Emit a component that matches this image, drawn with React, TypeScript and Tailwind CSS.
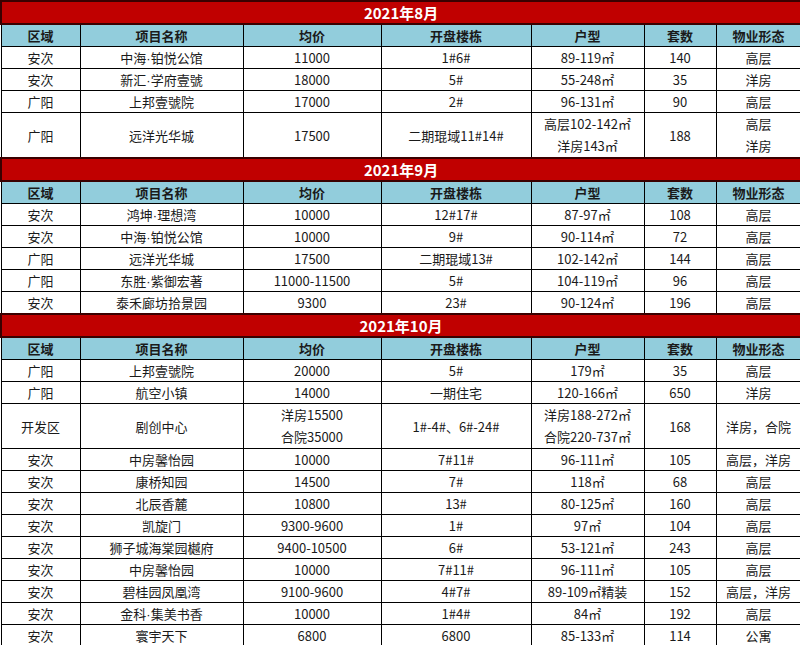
import React from 'react';

type Row = {
  area: string;
  name: string;
  price: string[];
  building: string;
  unit: string[];
  count: string;
  kind: string[];
};

const r = (
  area: string,
  name: string,
  price: string | string[],
  building: string,
  unit: string | string[],
  count: string,
  kind: string | string[]
): Row => ({
  area,
  name,
  price: Array.isArray(price) ? price : [price],
  building,
  unit: Array.isArray(unit) ? unit : [unit],
  count,
  kind: Array.isArray(kind) ? kind : [kind],
});

const sections: { title: string; rows: Row[] }[] = [
  {
    title: '2021年8月',
    rows: [
      r('安次', '中海·铂悦公馆', '11000', '1#6#', '89-119㎡', '140', '高层'),
      r('安次', '新汇·学府壹號', '18000', '5#', '55-248㎡', '35', '洋房'),
      r('广阳', '上邦壹號院', '17000', '2#', '96-131㎡', '90', '高层'),
      r('广阳', '远洋光华城', '17500', '二期琨域11#14#', ['高层102-142㎡', '洋房143㎡'], '188', ['高层', '洋房']),
    ],
  },
  {
    title: '2021年9月',
    rows: [
      r('安次', '鸿坤·理想湾', '10000', '12#17#', '87-97㎡', '108', '高层'),
      r('安次', '中海·铂悦公馆', '10000', '9#', '90-114㎡', '72', '高层'),
      r('广阳', '远洋光华城', '17500', '二期琨域13#', '102-142㎡', '144', '高层'),
      r('广阳', '东胜·紫御宏著', '11000-11500', '5#', '104-119㎡', '96', '高层'),
      r('安次', '泰禾廊坊拾景园', '9300', '23#', '90-124㎡', '196', '高层'),
    ],
  },
  {
    title: '2021年10月',
    rows: [
      r('广阳', '上邦壹號院', '20000', '5#', '179㎡', '35', '高层'),
      r('广阳', '航空小镇', '14000', '一期住宅', '120-166㎡', '650', '洋房'),
      r('开发区', '剧创中心', ['洋房15500', '合院35000'], '1#-4#、6#-24#', ['洋房188-272㎡', '合院220-737㎡'], '168', '洋房，合院'),
      r('安次', '中房馨怡园', '10000', '7#11#', '96-111㎡', '105', '高层，洋房'),
      r('安次', '康桥知园', '14500', '7#', '118㎡', '68', '高层'),
      r('安次', '北辰香麓', '10800', '13#', '80-125㎡', '160', '高层'),
      r('安次', '凯旋门', '9300-9600', '1#', '97㎡', '104', '高层'),
      r('安次', '狮子城海棠园樾府', '9400-10500', '6#', '53-121㎡', '243', '高层'),
      r('安次', '中房馨怡园', '10000', '7#11#', '96-111㎡', '105', '高层'),
      r('安次', '碧桂园凤凰湾', '9100-9600', '4#7#', '89-109㎡精装', '152', '高层，洋房'),
      r('安次', '金科·集美书香', '10000', '1#4#', '84㎡', '192', '高层'),
      r('安次', '寰宇天下', '6800', '6800', '85-133㎡', '114', '公寓'),
    ],
  },
];

const headers = ['区域', '项目名称', '均价', '开盘楼栋', '户型', '套数', '物业形态'];

// the middle dot is narrow in the original, CJK fonts draw it full width
const Name = ({ text }: { text: string }) => {
  const parts = text.split('·');
  if (parts.length === 1) return <>{text}</>;
  return (
    <>
      {parts[0]}
      <span className="leading-none" style={{ fontFamily: '"Liberation Sans", sans-serif' }}>
        ·
      </span>
      {parts[1]}
    </>
  );
};

const Lines = ({ items }: { items: string[] }) => (
  <>
    {items.map((t, i) => (
      <div key={i} className="h-[22px] leading-[22px]">
        {t}
      </div>
    ))}
  </>
);

const td = 'border border-black text-center align-middle p-0 leading-[21px]';

export default function App() {
  return (
    <div
      className="w-[800px] h-[645px] bg-white text-[#1a1a1a] text-[13px] overflow-hidden"
      style={{ fontFamily: '"Noto Sans CJK SC", "Noto Sans", sans-serif' }}
    >
      <table className="w-[800px] table-fixed border-collapse">
        <colgroup>
          <col className="w-[79px]" />
          <col className="w-[163px]" />
          <col className="w-[138px]" />
          <col className="w-[150px]" />
          <col className="w-[113px]" />
          <col className="w-[72px]" />
          <col className="w-[85px]" />
        </colgroup>
        <tbody>
          {sections.map((s) => (
            <React.Fragment key={s.title}>
              <tr className="h-[23px]">
                <td
                  colSpan={7}
                  className="border-2 border-[#3a0000] bg-[#c00000] text-white font-bold text-[15px] text-center p-0 leading-[20px]"
                >
                  {s.title}
                </td>
              </tr>
              <tr className="h-[22px] bg-[#92cddc]">
                {headers.map((h) => (
                  <td key={h} className={`${td} font-bold`}>
                    {h}
                  </td>
                ))}
              </tr>
              {s.rows.map((row, i) => {
                const tall = row.price.length > 1 || row.unit.length > 1 || row.kind.length > 1;
                return (
                  <tr key={i} className={tall ? 'h-[44px]' : 'h-[22px]'}>
                    <td className={td}>{row.area}</td>
                    <td className={td}>
                      <Name text={row.name} />
                    </td>
                    <td className={td}>
                      {row.price.length > 1 ? <Lines items={row.price} /> : row.price[0]}
                    </td>
                    <td className={td}>{row.building}</td>
                    <td className={td}>
                      {row.unit.length > 1 ? <Lines items={row.unit} /> : row.unit[0]}
                    </td>
                    <td className={td}>{row.count}</td>
                    <td className={td}>
                      {row.kind.length > 1 ? <Lines items={row.kind} /> : row.kind[0]}
                    </td>
                  </tr>
                );
              })}
            </React.Fragment>
          ))}
        </tbody>
      </table>
    </div>
  );
}
